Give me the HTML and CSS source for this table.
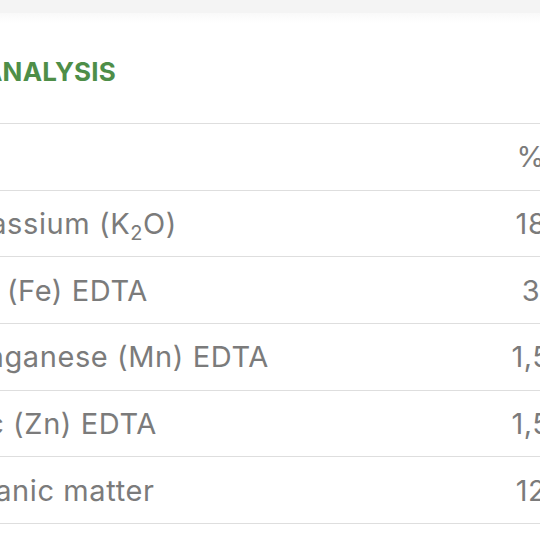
FILE: index.html
```html
<!DOCTYPE html>
<html lang="en">
<head>
<meta charset="utf-8">
<title>Analysis</title>
<link rel="stylesheet" href="styles.css">
</head>
<body>
<div class="topbar"></div>
<section class="card">
  <h2 class="title">ANALYSIS</h2>
  <div class="table">
    <div class="row head"><span class="label"></span><span class="value">%</span></div>
    <div class="row"><span class="label">Potassium (K<sub>2</sub>O)</span><span class="value">18</span></div>
    <div class="row"><span class="label">Iron (Fe) EDTA</span><span class="value">3</span></div>
    <div class="row"><span class="label">Manganese (Mn) EDTA</span><span class="value">1,5</span></div>
    <div class="row"><span class="label">Zinc (Zn) EDTA</span><span class="value">1,5</span></div>
    <div class="row"><span class="label">Organic matter</span><span class="value">12</span></div>
  </div>
</section>
</body>
</html>
```

FILE: styles.css
```css
html, body {
  margin: 0;
  padding: 0;
  overflow: hidden;
  background: #ffffff;
  font-family: Inter, Roboto, sans-serif;
}
.topbar {
  height: 13px;
  background: #f4f4f4;
}
.card {
  background: linear-gradient(#f9f9f9, #ffffff 10px);
  margin-left: -57px;
  width: 680px;
}
.title {
  margin: 0;
  height: 111px;
  box-sizing: border-box;
  border-bottom: 1px solid #dedede;
  display: flex;
  align-items: center;
  padding-left: 40px;
  padding-top: 6px;
  font-size: 26px;
  font-weight: 700;
  letter-spacing: 0.2px;
  color: #4e8e48;
}
.row {
  display: flex;
  align-items: center;
  height: 66.67px;
  box-sizing: border-box;
  border-bottom: 1px solid #dedede;
  color: #7b7b7b;
  font-size: 29px;
  letter-spacing: 0.6px;
}
.label {
  flex: 0 0 546px;
}
.value {
  flex: 0 0 84px;
  text-align: center;
}
sub {
  font-size: 20px;
  vertical-align: -6px;
  line-height: 0;
}
```
